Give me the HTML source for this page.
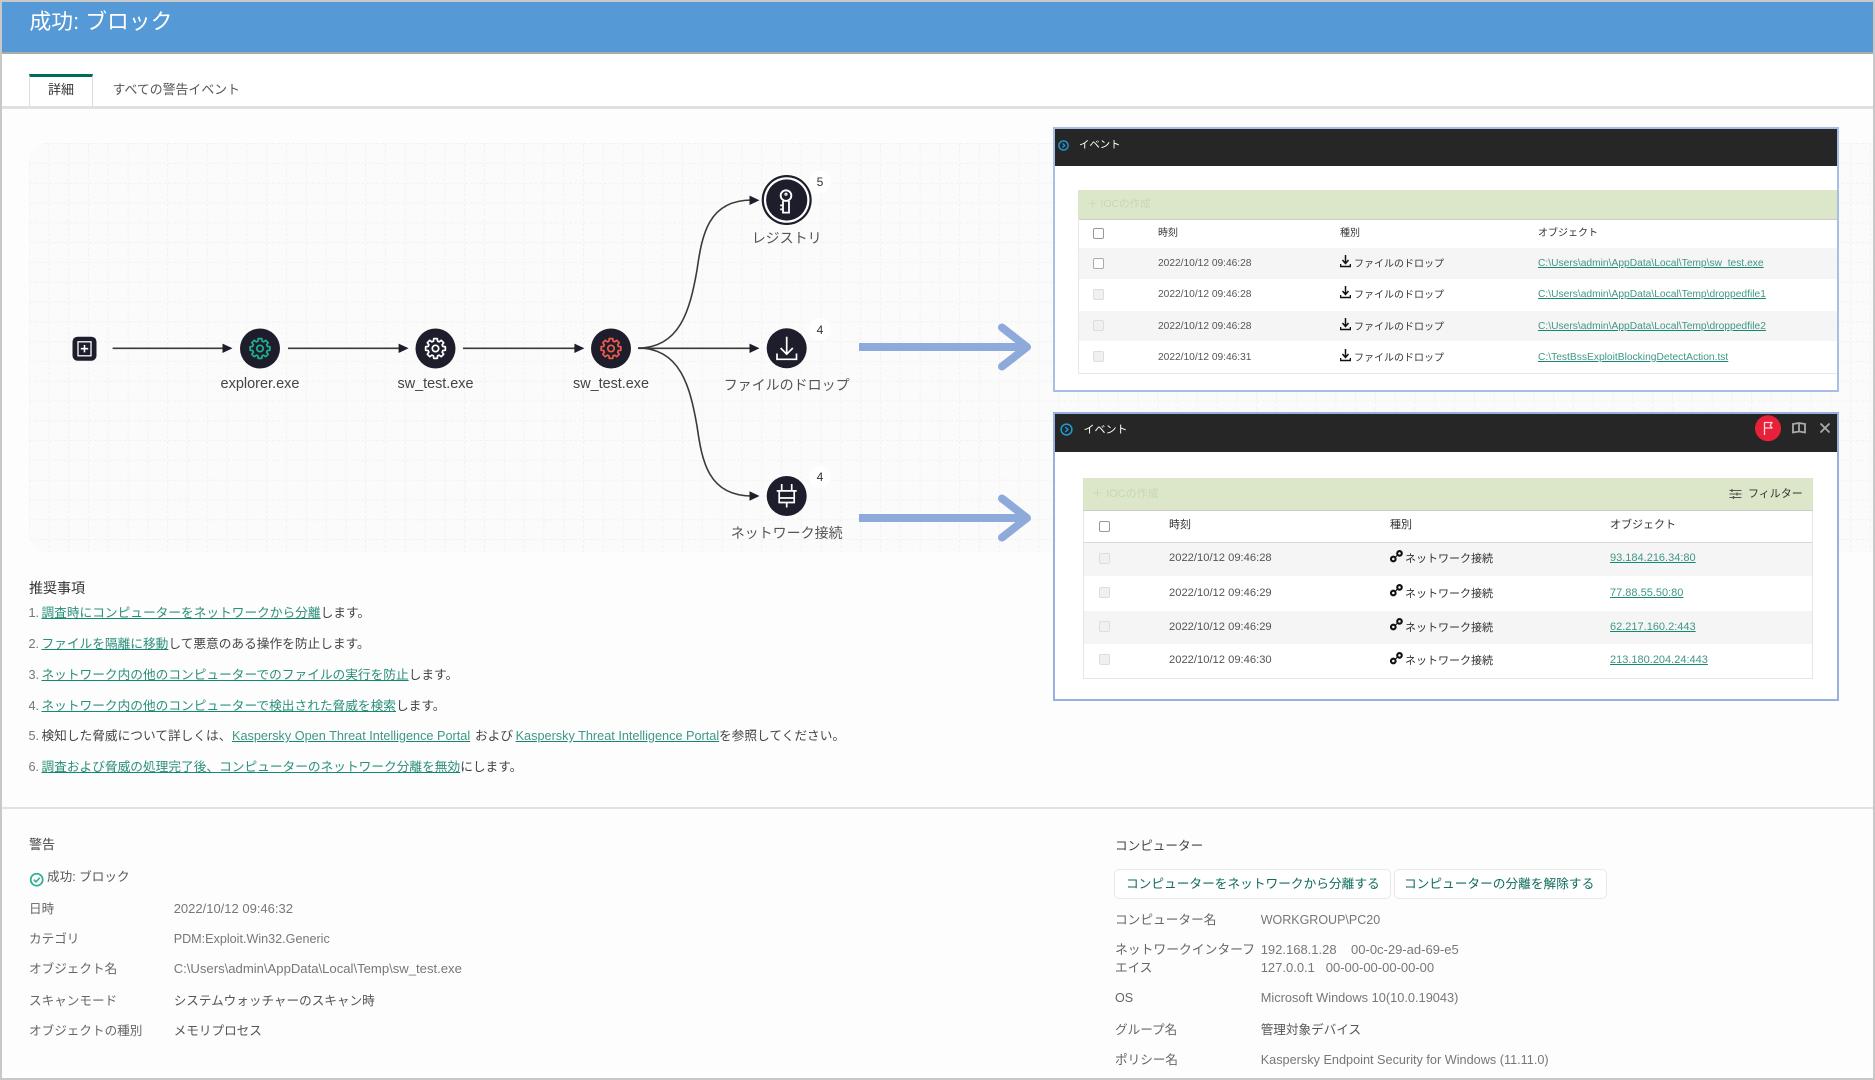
<!DOCTYPE html>
<html lang="ja">
<head>
<meta charset="utf-8">
<title>成功: ブロック</title>
<style>
html,body{margin:0;padding:0;background:#fff;}
#p{position:relative;width:1875px;height:1080px;overflow:hidden;background:#fff;font-family:"Liberation Sans","Noto Sans CJK JP",sans-serif;color:#444;filter:blur(0.3px);}
.t{position:absolute;white-space:nowrap;line-height:16px;height:16px;}
.c{transform:translateX(-50%);}
.b{position:absolute;}
a{color:#2b8f7b;text-decoration:underline;text-decoration-color:#128a70;}
.r{font-size:12.7px;color:#444;}
.lb{font-size:12.6px;color:#666;}
.v{font-size:12.8px;color:#777;}
.vj{font-size:12.6px;color:#555;}
.cb{position:absolute;box-sizing:border-box;background:#fff;border:1.5px solid #bbb;border-radius:2px;}
.cd{background:#f0f0f0;border-color:#ddd;}
.d1{font-size:10.2px;color:#555;}
.j1{font-size:10px;color:#333;}
.l1{font-size:10.25px;}
.l1 a,.l2 a{color:#3f9786;}
.d2{font-size:11.2px;color:#555;}
.j2{font-size:11px;color:#333;}
.l2{font-size:11px;}
</style>
</head>
<body>
<div id="p">
<!-- frame -->
<div class="b" style="left:0;top:0;width:1875px;height:2px;background:#c8c8c8"></div>
<div class="b" style="left:0;top:2px;width:1875px;height:50px;background:#5599d6"></div>
<div class="b" style="left:0;top:52px;width:1875px;height:1.5px;background:#aaa"></div>
<div class="t" style="left:29.5px;top:10px;height:24px;line-height:24px;font-size:21.8px;color:#fff">成功: ブロック</div>

<!-- tabs -->
<div class="b" style="left:0;top:109px;width:1875px;height:971px;background:#fdfdfd"></div>
<div class="b" style="left:0;top:106px;width:1875px;height:2.5px;background:#e0e0e0"></div>
<div class="b" style="left:29px;top:74px;width:64px;height:32px;box-sizing:border-box;border:1px solid #ddd;border-top:3px solid #006d5b;border-bottom:0;background:#fff"></div>
<div class="t c" style="left:61px;top:82px;font-size:13px;color:#333">詳細</div>
<div class="t" style="left:112.5px;top:82px;font-size:12.9px;color:#555">すべての警告イベント</div>

<!-- graph -->
<svg class="b" style="left:29px;top:143px" width="1844" height="409" viewBox="0 0 1844 409">
<defs>
<pattern id="g" x="0" y="0" width="19.8" height="19.8" patternUnits="userSpaceOnUse" patternTransform="translate(0.5,1)">
<path d="M0 19.5H19.8M19.5 0V19.8" stroke="#efefef" stroke-width="1" stroke-dasharray="3 2" fill="none"/>
</pattern>
<clipPath id="rc"><path d="M18 0H1844V409H18A18 18 0 0 1 0 391V18A18 18 0 0 1 18 0Z"/></clipPath>
</defs>
<g clip-path="url(#rc)">
<rect width="1844" height="409" fill="#fbfbfb"/>
<rect width="1844" height="409" fill="url(#g)"/>
</g>
</svg>

<svg class="b" style="left:0;top:0" width="1875" height="600" viewBox="0 0 1875 600" fill="none">
<defs>
<g id="gear" fill="none" stroke-width="1.7" stroke-linejoin="round">
<path d="M-2.09-7.31L-1.74-9.85L1.74-9.85L2.09-7.31L3.68-6.65L5.74-8.19L8.19-5.74L6.65-3.68L7.31-2.09L9.85-1.74L9.85 1.74L7.31 2.09L6.65 3.68L8.19 5.74L5.74 8.19L3.68 6.65L2.09 7.31L1.74 9.85L-1.74 9.85L-2.09 7.31L-3.68 6.65L-5.74 8.19L-8.19 5.74L-6.65 3.68L-7.31 2.09L-9.85 1.74L-9.85-1.74L-7.31-2.09L-6.65-3.68L-8.19-5.74L-5.74-8.19L-3.68-6.65Z"/>
<circle r="3.2"/>
</g>
</defs>
<!-- straight edges -->
<g stroke="#3a3a3a" stroke-width="1.6">
<path d="M112.6 348.3H225"/>
<path d="M288 348.3H401"/>
<path d="M463 348.3H577"/>
<path d="M638 348.3H752"/>
<path d="M638 348C680 348 690 310 697 270C702 235 708 200 752 200"/>
<path d="M638 348C680 348 690 386 697 426C702 461 708 496 752 496"/>
</g>
<g fill="#1d1d2b">
<path d="M232.5 348.3L222.5 343.6V353Z"/>
<path d="M408.6 348.3L398.6 343.6V353Z"/>
<path d="M584.4 348.3L574.4 343.6V353Z"/>
<path d="M759.5 348.3L749.5 343.6V353Z"/>
<path d="M759.5 200.3L749.5 195.6V205Z"/>
<path d="M759.5 496L749.5 491.3V500.7Z"/>
</g>
<!-- start node -->
<rect x="72.5" y="336.7" width="24" height="24" rx="5" fill="#1d1d2b"/>
<rect x="78" y="341.8" width="13" height="14" fill="none" stroke="#fff" stroke-width="1.3"/>
<path d="M84.5 345V352.4M80.8 348.7H88.2" stroke="#fff" stroke-width="1.6"/>
<!-- process nodes -->
<circle cx="260" cy="348.5" r="20" fill="#1d1d2b"/>
<use href="#gear" x="260" y="348.5" stroke="#1fb08f"/>
<circle cx="435.5" cy="348.5" r="20" fill="#1d1d2b"/>
<use href="#gear" x="435.5" y="348.5" stroke="#fff"/>
<circle cx="611" cy="348.5" r="20" fill="#1d1d2b"/>
<use href="#gear" x="611" y="348.5" stroke="#ef5a4a"/>
<!-- registry -->
<circle cx="786.7" cy="200" r="25" fill="#1d1d2b"/>
<circle cx="786.7" cy="200" r="22.8" fill="#fff"/>
<circle cx="786.7" cy="200" r="20.6" fill="#1d1d2b"/>
<g stroke="#fff" fill="none">
<circle cx="786" cy="195.6" r="5.3" stroke-width="1.9"/>
<path d="M783 201V212.600H789V201M783 205.400H780.200M783 209.400H780.200" stroke-width="1.8"/>
<circle cx="786" cy="194.2" r="1" stroke-width="1.200"/>
</g>
<!-- download -->
<circle cx="786.7" cy="348.3" r="20" fill="#1d1d2b"/>
<g stroke="#fff" stroke-width="1.7" fill="none">
<path d="M786.7 336.7V354M780.6 348L786.7 354.2L792.8 348"/>
<path d="M777 353.5V359.3H796.5V353.5"/>
</g>
<!-- plug -->
<circle cx="786.7" cy="496" r="20" fill="#1d1d2b"/>
<g stroke="#fff" stroke-width="1.7" fill="none">
<path d="M781.7 484V490.7M791.7 484V490.7M776.7 490.9H796.7"/>
<path d="M779.2 491V502.5H794.2V491M779.2 498H794.2M786.7 502.5V507.5"/>
</g>
<!-- badges -->
<circle cx="820" cy="181.7" r="11" fill="#fff"/>
<circle cx="820" cy="329" r="11" fill="#fff"/>
<circle cx="820" cy="476.7" r="11" fill="#fff"/>
<!-- blue arrows -->
<g stroke="#8eaadb" stroke-width="8" stroke-linecap="round" stroke-linejoin="round" fill="none">
<path d="M863 347H1026M1002 327.5L1027 347L1002 366.5"/>
<path d="M863 518H1026M1002 498.5L1027 518L1002 537.5"/>
</g>
<path d="M859 343H870V351H859ZM859 514H870V522H859Z" fill="#8eaadb"/>
</svg>
<div class="t c" style="left:820px;top:174px;font-size:12px;color:#333">5</div>
<div class="t c" style="left:820px;top:321.5px;font-size:12px;color:#333">4</div>
<div class="t c" style="left:820px;top:469px;font-size:12px;color:#333">4</div>
<div class="t c" style="left:260px;top:376px;font-size:14.5px;color:#444">explorer.exe</div>
<div class="t c" style="left:435.5px;top:376px;font-size:14.4px;color:#444">sw_test.exe</div>
<div class="t c" style="left:611px;top:376px;font-size:14.4px;color:#444">sw_test.exe</div>
<div class="t c" style="left:786.7px;top:230px;font-size:14px;color:#555">レジストリ</div>
<div class="t c" style="left:786.7px;top:377px;font-size:14px;color:#555">ファイルのドロップ</div>
<div class="t c" style="left:786.7px;top:525px;font-size:14px;color:#555">ネットワーク接続</div>

<!-- panel 1 -->
<div class="b" style="left:1053px;top:127px;width:786px;height:265px;box-sizing:border-box;border:2px solid #a9bee5;background:#fff"></div>
<div class="b" style="left:1055px;top:129px;width:782px;height:37px;background:#262626"></div>
<svg class="b" style="left:1057px;top:139px" width="13" height="13" viewBox="0 0 13 13" fill="none"><circle cx="6.5" cy="6.5" r="4.6" stroke="#1e9bd7" stroke-width="1.4"/><path d="M5.5 4.5L7.8 6.5L5.5 8.5" stroke="#1e9bd7" stroke-width="1.2"/></svg>
<div class="t" style="left:1079px;top:138px;font-size:10.4px;color:#fff">イベント</div>
<div class="b" style="left:1078px;top:190px;width:759px;height:29.5px;background:#dce7c9;border-bottom:1px solid #ccc;box-sizing:border-box"></div>
<div class="t" style="left:1087px;top:196px;font-size:10.5px;color:#c8d6b3">＋ IOCの作成</div>
<div class="b" style="left:1078px;top:219px;width:1px;height:154px;background:#e8e8e8"></div>
<div class="b" style="left:1078px;top:247.5px;width:759px;height:1px;background:#d8d8d8"></div>
<div class="b" style="left:1079px;top:248px;width:758px;height:31px;background:#f5f5f5"></div>
<div class="b" style="left:1079px;top:311px;width:758px;height:30px;background:#f5f5f5"></div>
<div class="b" style="left:1078px;top:373px;width:759px;height:1px;background:#e8e8e8"></div>
<div class="cb" style="left:1093px;top:228px;width:11px;height:11px;border-color:#999"></div>
<div class="t j1" style="left:1158px;top:226px">時刻</div>
<div class="t j1" style="left:1340px;top:226px">種別</div>
<div class="t j1" style="left:1538px;top:226px">オブジェクト</div>

<div class="cb" style="left:1093px;top:258px;width:11px;height:11px;border-color:#aaa"></div>
<div class="cb cd" style="left:1093px;top:289px;width:11px;height:11px"></div>
<div class="cb cd" style="left:1093px;top:320px;width:11px;height:11px"></div>
<div class="cb cd" style="left:1093px;top:351px;width:11px;height:11px"></div>

<div class="t d1" style="left:1158px;top:255.5px">2022/10/12 09:46:28</div>
<div class="t d1" style="left:1158px;top:287px">2022/10/12 09:46:28</div>
<div class="t d1" style="left:1158px;top:318.5px">2022/10/12 09:46:28</div>
<div class="t d1" style="left:1158px;top:349.5px">2022/10/12 09:46:31</div>

<svg class="b" style="left:1340px;top:254.5px" width="11" height="13" viewBox="0 0 11 13" fill="none" stroke="#111"><path d="M5.5 0V7.500M2.500 5L5.500 8.500L8.500 5" stroke-width="1.500"/><path d="M0.500 9V11.500H10.500V9" stroke-width="1.600"/></svg>
<svg class="b" style="left:1340px;top:286px" width="11" height="13" viewBox="0 0 11 13" fill="none" stroke="#111"><path d="M5.5 0V7.500M2.500 5L5.500 8.500L8.500 5" stroke-width="1.500"/><path d="M0.500 9V11.500H10.500V9" stroke-width="1.600"/></svg>
<svg class="b" style="left:1340px;top:318px" width="11" height="13" viewBox="0 0 11 13" fill="none" stroke="#111"><path d="M5.5 0V7.500M2.500 5L5.500 8.500L8.500 5" stroke-width="1.500"/><path d="M0.500 9V11.500H10.500V9" stroke-width="1.600"/></svg>
<svg class="b" style="left:1340px;top:349px" width="11" height="13" viewBox="0 0 11 13" fill="none" stroke="#111"><path d="M5.5 0V7.500M2.500 5L5.500 8.500L8.500 5" stroke-width="1.500"/><path d="M0.500 9V11.500H10.500V9" stroke-width="1.600"/></svg>

<div class="t j1" style="left:1354px;top:256.5px">ファイルのドロップ</div>
<div class="t j1" style="left:1354px;top:288px">ファイルのドロップ</div>
<div class="t j1" style="left:1354px;top:319.5px">ファイルのドロップ</div>
<div class="t j1" style="left:1354px;top:350.5px">ファイルのドロップ</div>

<div class="t l1" style="left:1538px;top:255.5px"><a>C:\Users\admin\AppData\Local\Temp\sw_test.exe</a></div>
<div class="t l1" style="left:1538px;top:287px"><a>C:\Users\admin\AppData\Local\Temp\droppedfile1</a></div>
<div class="t l1" style="left:1538px;top:318.5px"><a>C:\Users\admin\AppData\Local\Temp\droppedfile2</a></div>
<div class="t l1" style="left:1538px;top:349.5px"><a>C:\TestBssExploitBlockingDetectAction.tst</a></div>

<!-- panel 2 -->
<div class="b" style="left:1053px;top:412px;width:786px;height:289px;box-sizing:border-box;border:2px solid #97b0e0;background:#fff"></div>
<div class="b" style="left:1055px;top:414px;width:782px;height:38px;background:#262626"></div>
<svg class="b" style="left:1059px;top:422px" width="15" height="15" viewBox="0 0 15 15" fill="none"><circle cx="7.500" cy="7.500" r="5.400" stroke="#1e9bd7" stroke-width="1.500"/><path d="M6.300 5L9 7.500L6.300 10" stroke="#1e9bd7" stroke-width="1.400"/></svg>
<div class="t" style="left:1083.5px;top:421.5px;font-size:11px;color:#fff">イベント</div>
<svg class="b" style="left:1755px;top:415px" width="65" height="27" viewBox="0 0 65 27" fill="none">
<circle cx="13" cy="13.300" r="13" fill="#e8203a"/>
<path d="M9.500 20V7.500H17L15.200 10.300L17 13H9.500" stroke="#ffd8dc" stroke-width="1.300" stroke-linejoin="round"/>
<path d="M38 9V17.500L44 16.500L50 17.500V9L44 8ZM44 8.500V16.500" stroke="#aaa" stroke-width="1.800"/>
</svg>
<svg class="b" style="left:1819px;top:422px" width="12" height="12" viewBox="0 0 12 12" fill="none"><path d="M1.500 1.500L10.500 10.500M10.500 1.500L1.500 10.500" stroke="#aaa" stroke-width="1.800"/></svg>
<div class="b" style="left:1082.500px;top:478.300px;width:730px;height:33px;background:#dce7c9;border-bottom:1px solid #ccc;box-sizing:border-box"></div>
<div class="t" style="left:1092px;top:486px;font-size:11px;color:#c8d6b3">＋ IOCの作成</div>
<svg class="b" style="left:1729px;top:488px" width="13" height="12" viewBox="0 0 13 12" fill="none" stroke="#555" stroke-width="1"><path d="M0.500 2.500H12.500M0.500 6H12.500M0.500 9.500H12.500"/><path d="M3 1V4M8 4.500V7.500M4.500 8V11" stroke-width="1.300"/></svg>
<div class="t" style="left:1748px;top:486px;font-size:11px;color:#333">フィルター</div>
<div class="b" style="left:1082.500px;top:511px;width:730px;height:167.500px;box-sizing:border-box;border:1px solid #e6e6e6;border-top:0"></div>
<div class="b" style="left:1083px;top:542px;width:729px;height:1px;background:#d8d8d8"></div>
<div class="b" style="left:1083.500px;top:543px;width:728px;height:33px;background:#f5f5f5"></div>
<div class="b" style="left:1083.500px;top:611px;width:728px;height:33px;background:#f5f5f5"></div>
<div class="cb" style="left:1099px;top:521px;width:11px;height:11px;border-color:#999"></div>
<div class="t j2" style="left:1169px;top:517px">時刻</div>
<div class="t j2" style="left:1390px;top:517px">種別</div>
<div class="t j2" style="left:1610px;top:517px">オブジェクト</div>

<div class="cb cd" style="left:1099px;top:553px;width:11px;height:11px"></div>
<div class="cb cd" style="left:1099px;top:587px;width:11px;height:11px"></div>
<div class="cb cd" style="left:1099px;top:621px;width:11px;height:11px"></div>
<div class="cb cd" style="left:1099px;top:654px;width:11px;height:11px"></div>

<div class="t d2" style="left:1169px;top:549.700px">2022/10/12 09:46:28</div>
<div class="t d2" style="left:1169px;top:584.5px">2022/10/12 09:46:29</div>
<div class="t d2" style="left:1169px;top:618.5px">2022/10/12 09:46:29</div>
<div class="t d2" style="left:1169px;top:651.700px">2022/10/12 09:46:30</div>

<svg class="b" style="left:1390px;top:550px" width="13" height="13" viewBox="0 0 13 13" fill="none" stroke="#111" stroke-width="2.100"><circle cx="3.300" cy="9" r="2.300"/><circle cx="9.500" cy="3.400" r="2.300"/><path d="M5.500 7L7.300 5.300" stroke-width="1.200"/></svg>
<svg class="b" style="left:1390px;top:584px" width="13" height="13" viewBox="0 0 13 13" fill="none" stroke="#111" stroke-width="2.100"><circle cx="3.300" cy="9" r="2.300"/><circle cx="9.500" cy="3.400" r="2.300"/><path d="M5.500 7L7.300 5.300" stroke-width="1.200"/></svg>
<svg class="b" style="left:1390px;top:618px" width="13" height="13" viewBox="0 0 13 13" fill="none" stroke="#111" stroke-width="2.100"><circle cx="3.300" cy="9" r="2.300"/><circle cx="9.500" cy="3.400" r="2.300"/><path d="M5.500 7L7.300 5.300" stroke-width="1.200"/></svg>
<svg class="b" style="left:1390px;top:651.500px" width="13" height="13" viewBox="0 0 13 13" fill="none" stroke="#111" stroke-width="2.100"><circle cx="3.300" cy="9" r="2.300"/><circle cx="9.500" cy="3.400" r="2.300"/><path d="M5.500 7L7.300 5.300" stroke-width="1.200"/></svg>

<div class="t j2" style="left:1405px;top:550.500px">ネットワーク接続</div>
<div class="t j2" style="left:1405px;top:585.5px">ネットワーク接続</div>
<div class="t j2" style="left:1405px;top:619.5px">ネットワーク接続</div>
<div class="t j2" style="left:1405px;top:652.500px">ネットワーク接続</div>

<div class="t l2" style="left:1610px;top:549.700px"><a>93.184.216.34:80</a></div>
<div class="t l2" style="left:1610px;top:584.5px"><a>77.88.55.50:80</a></div>
<div class="t l2" style="left:1610px;top:618.5px"><a>62.217.160.2:443</a></div>
<div class="t l2" style="left:1610px;top:651.700px"><a>213.180.204.24:443</a></div>

<!-- recommendations -->
<div class="t" style="left:29px;top:579.700px;font-size:14px;color:#333">推奨事項</div>
<div class="t r" style="left:28.500px;top:605px"><span style="color:#777">1.</span></div>
<div class="t r" style="left:41.500px;top:605px"><a>調査時にコンピューターをネットワークから分離</a>します。</div>
<div class="t r" style="left:28.500px;top:636px"><span style="color:#777">2.</span></div>
<div class="t r" style="left:41.500px;top:636px"><a>ファイルを隔離に移動</a>して悪意のある操作を防止します。</div>
<div class="t r" style="left:28.500px;top:666.7px"><span style="color:#777">3.</span></div>
<div class="t r" style="left:41.500px;top:666.7px"><a>ネットワーク内の他のコンピューターでのファイルの実行を防止</a>します。</div>
<div class="t r" style="left:28.500px;top:698px"><span style="color:#777">4.</span></div>
<div class="t r" style="left:41.500px;top:698px"><a>ネットワーク内の他のコンピューターで検出された脅威を検索</a>します。</div>
<div class="t r" style="left:28.500px;top:728px"><span style="color:#777">5.</span></div>
<div class="t r" style="left:41.500px;top:728px">検知した脅威について詳しくは、</div>
<div class="t r" style="left:232px;top:728px"><a style="color:#3f9786">Kaspersky Open Threat Intelligence Portal</a></div>
<div class="t r" style="left:475px;top:728px">および</div>
<div class="t r" style="left:515.600px;top:728px"><a style="color:#3f9786">Kaspersky Threat Intelligence Portal</a></div>
<div class="t r" style="left:719px;top:728px">を参照してください。</div>
<div class="t r" style="left:28.500px;top:759px"><span style="color:#777">6.</span></div>
<div class="t r" style="left:41.500px;top:759px"><a>調査および脅威の処理完了後、コンピューターのネットワーク分離を無効</a>にします。</div>

<div class="b" style="left:0;top:807px;width:1875px;height:1.500px;background:#e2e2e2"></div>

<!-- alert -->
<div class="t" style="left:29px;top:837px;font-size:13px;color:#444">警告</div>
<svg class="b" style="left:29px;top:872px" width="16" height="16" viewBox="0 0 16 16" fill="none" stroke="#2eae95"><circle cx="7.700" cy="7.700" r="6" stroke-width="1.700"/><path d="M4.800 7.700L7 9.900L10.700 5.800" stroke-width="1.600"/></svg>
<div class="t vj" style="left:47px;top:869px">成功: ブロック</div>
<div class="t lb" style="left:29px;top:900.700px">日時</div>
<div class="t lb" style="left:29px;top:930.700px">カテゴリ</div>
<div class="t lb" style="left:29px;top:961px">オブジェクト名</div>
<div class="t lb" style="left:29px;top:992.5px">スキャンモード</div>
<div class="t lb" style="left:29px;top:1022.700px">オブジェクトの種別</div>
<div class="t v" style="left:173.700px;top:900.700px;font-size:13px">2022/10/12 09:46:32</div>
<div class="t v" style="left:173.700px;top:930.700px;font-size:12.6px">PDM:Exploit.Win32.Generic</div>
<div class="t v" style="left:173.700px;top:961px;font-size:13.1px">C:\Users\admin\AppData\Local\Temp\sw_test.exe</div>
<div class="t vj" style="left:173.700px;top:992.5px">システムウォッチャーのスキャン時</div>
<div class="t vj" style="left:173.700px;top:1022.700px">メモリプロセス</div>

<!-- computer -->
<div class="t" style="left:1115px;top:838px;font-size:12.600px;color:#444">コンピューター</div>
<div class="b" style="left:1113.600px;top:868.700px;width:277.400px;height:30.600px;box-sizing:border-box;border:1.500px solid #e8e8e8;border-radius:5px;background:#fff"></div>
<div class="b" style="left:1393.600px;top:868.700px;width:213.200px;height:30.600px;box-sizing:border-box;border:1.500px solid #e8e8e8;border-radius:5px;background:#fff"></div>
<div class="t" style="left:1126px;top:875.5px;font-size:12.700px;color:#0f6b5c">コンピューターをネットワークから分離する</div>
<div class="t" style="left:1404px;top:875.5px;font-size:12.700px;color:#0f6b5c">コンピューターの分離を解除する</div>
<div class="t lb" style="left:1115px;top:912px;font-size:12.7px">コンピューター名</div>
<div class="t lb" style="left:1115px;top:942.3px;font-size:12.8px">ネットワークインターフ</div>
<div class="t lb" style="left:1115px;top:960.300px">エイス</div>
<div class="t lb" style="left:1115px;top:990px">OS</div>
<div class="t lb" style="left:1115px;top:1022px">グループ名</div>
<div class="t lb" style="left:1115px;top:1052.3px">ポリシー名</div>
<div class="t v" style="left:1260.700px;top:912px;font-size:12.5px">WORKGROUP\PC20</div>
<div class="t v" style="left:1260.700px;top:942.3px;font-size:13px">192.168.1.28&nbsp;&nbsp;&nbsp;&nbsp;00-0c-29-ad-69-e5</div>
<div class="t v" style="left:1260.700px;top:960.300px;font-size:13px">127.0.0.1&nbsp;&nbsp;&nbsp;00-00-00-00-00-00</div>
<div class="t v" style="left:1260.700px;top:990px">Microsoft Windows 10(10.0.19043)</div>
<div class="t vj" style="left:1260.700px;top:1022px">管理対象デバイス</div>
<div class="t v" style="left:1260.700px;top:1052.3px;font-size:12.7px">Kaspersky Endpoint Security for Windows (11.11.0)</div>

<!-- outer borders -->
<div class="b" style="left:0;top:0;width:2px;height:1080px;background:#c8c8c8"></div>
<div class="b" style="left:1873px;top:0;width:2px;height:1080px;background:#c8c8c8"></div>
<div class="b" style="left:0;top:1077.500px;width:1875px;height:2.500px;background:#c8c8c8"></div>
</div>
</body>
</html>
